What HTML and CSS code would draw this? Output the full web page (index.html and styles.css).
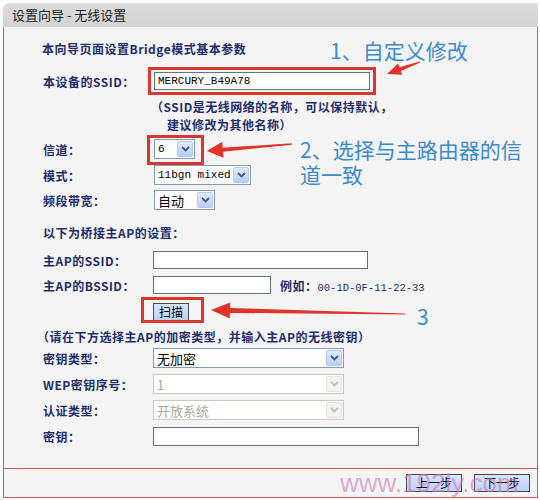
FILE: index.html
```html
<!DOCTYPE html>
<html lang="zh-CN">
<head>
<meta charset="UTF-8">
<meta name="viewport" content="width=device-width, initial-scale=1.0">
<title>设置向导 - 无线设置</title>
<link rel="stylesheet" href="styles.css">
</head>
<body>
<div class="wizard">
    <div class="wtitle">设置向导 - 无线设置</div>

    <div class="wbody">
        <div class="intro">本向导页面设置Bridge模式基本参数</div>

        <div class="row row-ssid">
            <span class="lbl">本设备的SSID：</span>
            <input type="text" class="field f-ssid" value="MERCURY_B49A78">
        </div>
        <div class="note">（SSID是无线网络的名称，可以保持默认，</div>
        <div class="note note-cont">建议修改为其他名称）</div>

        <div class="row row-chan first">
            <span class="lbl">信道：</span>
            <div class="sel s-chan">
                <span class="opt mono">6</span>
                <span class="drop"><svg width="9" height="6" viewBox="0 0 9 6"><path d="M1 1 L4.5 4.5 L8 1" fill="none" stroke="#3f5586" stroke-width="1.8"/></svg></span>
            </div>
        </div>
        <div class="row row-chan">
            <span class="lbl">模式：</span>
            <div class="sel s-mode">
                <span class="opt mono">11bgn mixed</span>
                <span class="drop"><svg width="9" height="6" viewBox="0 0 9 6"><path d="M1 1 L4.5 4.5 L8 1" fill="none" stroke="#3f5586" stroke-width="1.8"/></svg></span>
            </div>
        </div>
        <div class="row row-band">
            <span class="lbl">频段带宽：</span>
            <div class="sel s-band">
                <span class="opt">自动</span>
                <span class="drop"><svg width="9" height="6" viewBox="0 0 9 6"><path d="M1 1 L4.5 4.5 L8 1" fill="none" stroke="#3f5586" stroke-width="1.8"/></svg></span>
            </div>
        </div>

        <div class="section">以下为桥接主AP的设置：</div>
        <div class="row row-ap">
            <span class="lbl">主AP的SSID：</span>
            <input type="text" class="field f-apssid" value="">
        </div>
        <div class="row row-bssid">
            <span class="lbl">主AP的BSSID：</span>
            <input type="text" class="field f-bssid" value="">
            <span class="hint">例如：<span class="mono">00-1D-0F-11-22-33</span></span>
        </div>
        <div class="row row-scan">
            <span class="lbl"></span>
            <button class="btn btn-scan">扫描</button>
        </div>

        <div class="section note-enc">（请在下方选择主AP的加密类型，并输入主AP的无线密钥）</div>
        <div class="row row-sec first">
            <span class="lbl">密钥类型：</span>
            <div class="sel s-wide">
                <span class="opt">无加密</span>
                <span class="drop"><svg width="9" height="6" viewBox="0 0 9 6"><path d="M1 1 L4.5 4.5 L8 1" fill="none" stroke="#3f5586" stroke-width="1.8"/></svg></span>
            </div>
        </div>
        <div class="row row-sec">
            <span class="lbl">WEP密钥序号：</span>
            <div class="sel s-wide off">
                <span class="opt">1</span>
                <span class="drop"><svg width="9" height="6" viewBox="0 0 9 6"><path d="M1 1 L4.5 4.5 L8 1" fill="none" stroke="#c4c2b6" stroke-width="1.8"/></svg></span>
            </div>
        </div>
        <div class="row row-sec">
            <span class="lbl">认证类型：</span>
            <div class="sel s-wide off">
                <span class="opt">开放系统</span>
                <span class="drop"><svg width="9" height="6" viewBox="0 0 9 6"><path d="M1 1 L4.5 4.5 L8 1" fill="none" stroke="#c4c2b6" stroke-width="1.8"/></svg></span>
            </div>
        </div>
        <div class="row row-sec">
            <span class="lbl">密钥：</span>
            <input type="text" class="field f-key" value="">
        </div>
    </div>

    <div class="wfoot">
        <button class="btn">上一步</button>
        <button class="btn">下一步</button>
    </div>
</div>

<!-- annotations drawn over the screenshot -->
<svg class="marks" width="540" height="500" viewBox="0 0 540 500">
    <rect x="149.5" y="68.5" width="225" height="25" fill="none" stroke="#d8372f" stroke-width="3"/>
    <rect x="148.5" y="136.5" width="54" height="27" fill="none" stroke="#d8372f" stroke-width="3"/>
    <rect x="142.5" y="298.5" width="60" height="23" fill="none" stroke="#d8372f" stroke-width="3"/>
    <polygon fill="#e2332b" points="387,74 398.1,63.6 399.5,67.3 419.8,61.5 420.2,62.5 400.9,71.1 402.2,74.8"/>
    <polygon fill="#e2332b" points="207,151 222.2,141.7 222.7,147.7 291.9,143.3 292.1,144.7 223.1,151.7 223.6,157.7"/>
    <polygon fill="#e2332b" points="211,310 230.2,302.4 230.1,307.9 405,313.5 405,314.5 229.9,312.9 229.8,318.4"/>
</svg>
<div class="tip tip1">1、自定义修改</div>
<div class="tip tip2">2、选择与主路由器的信<br>道一致</div>
<div class="tip tip3">3</div>
<div class="wmark">www.192ly.com</div>
</body>
</html>
```

FILE: styles.css
```css
body{
    margin: 0;
    background-color: #fff;
    font-family: "Noto Sans CJK SC", sans-serif;
}
.wizard{
    width: 535px;
    margin: 3px 0 0 3px;
}
.wtitle{
    height: 24px;
    line-height: 24px;
    padding-left: 9px;
    font-size: 13px;
    color: #222;
    background: linear-gradient(#dddddd, #d3d3d3);
    border-radius: 6px 0 0 0;
}
.wbody{
    height: 441px;
    box-sizing: border-box;
    padding: 11px 0 0 39px;
    background-color: #f4f4f4;
    border-left: 1px solid #cf5b5b;
    border-right: 1px solid #cf5b5b;
}
.intro, .lbl, .note, .section, .hint{
    font-size: 12px;
    font-weight: 700;
    letter-spacing: 0.5px;
    color: #1f2d6b;
}
.intro{
    height: 22px;
    line-height: 22px;
    margin-left: -1px;
}
.row{
    display: flex;
    align-items: center;
    height: 22px;
}
.lbl{
    width: 110px;
    flex-shrink: 0;
}
.mono{
    font-family: "Liberation Mono", monospace;
    font-size: 11px;
    letter-spacing: 0;
    font-weight: 400;
}
.row-ssid{ margin-top: 10px; }
.note{
    height: 18px;
    line-height: 18px;
    margin-top: 6px;
    margin-left: 108px;
}
.note-cont{
    margin-top: 0;
    margin-left: 124px;
}
.row-chan{ height: 26px; }
.row-chan.first{ margin-top: 2px; }
.row-band{ height: 24px; }
.section{
    height: 22px;
    line-height: 22px;
    margin-top: 10px;
}
.row-ap{ height: 24px; margin-top: 4px; }
.row-bssid{ height: 24px; margin-top: 1px; }
.row-scan{ height: 24px; margin-top: 3px; }
.note-enc{
    height: 20px;
    line-height: 20px;
    margin-top: 3px;
    margin-left: -6px;
}
.row-sec{ margin-top: 4px; }
.row-sec.first{ margin-top: 0; }

/* text boxes */
.field{
    box-sizing: border-box;
    height: 18px;
    margin: 0;
    padding: 0 3px;
    border: 1px solid #5d7676;
    background: #fff;
    font-family: "Liberation Mono", monospace;
    font-size: 11px;
    color: #000;
}
.f-ssid{ width: 216px; margin-left: 1px; }
.f-apssid{ width: 215px; }
.f-bssid{ width: 118px; }
.f-key{ width: 266px; height: 19px; }
.hint{
    margin-left: 9px;
    font-weight: 700;
}
.hint .mono{
    font-size: 10.5px;
    color: #1f2d6b;
}

/* drop-down boxes */
.sel{
    box-sizing: border-box;
    display: flex;
    align-items: center;
    height: 20px;
    border: 1px solid #7f9db9;
    background: #fff;
    color: #000;
}
.sel .opt{
    flex: 1;
    padding-left: 3px;
    font-size: 13px;
    white-space: nowrap;
}
.sel .opt.mono{ font-size: 11px; }
.drop{
    box-sizing: border-box;
    display: flex;
    align-items: center;
    justify-content: center;
    width: 16px;
    height: 16px;
    margin-right: 1px;
    border: 1px solid #b4c8f0;
    border-radius: 2px;
    background: linear-gradient(#e1eafe, #b9cdf7);
}
.s-chan{ width: 41px; margin-left: 1px; }
.s-mode{ width: 97px; margin-left: 1px; }
.s-band{ width: 61px; margin-left: 1px; }
.s-wide{ width: 191px; }
.sel.off{
    border-color: #cdcabd;
    color: #aca899;
}
.sel.off .drop{
    border-color: #e3e1d8;
    background: #f3f2ed;
}

/* buttons */
.btn{
    box-sizing: border-box;
    height: 18px;
    padding: 0;
    border: 1px solid #4a4a4a;
    background: linear-gradient(#d6e6fb, #bcd2f3);
    font-family: "Noto Sans CJK SC", sans-serif;
    font-size: 12px;
    line-height: 16px;
    color: #000;
}
.btn-scan{ width: 36px; }
.wfoot{
    display: flex;
    align-items: center;
    justify-content: flex-end;
    gap: 12px;
    height: 28px;
    padding-right: 7px;
    background-color: #f4f4f4;
    border: 1px solid #cf5b5b;
}
.wfoot .btn{ width: 56px; }

/* annotation layer */
.marks{
    position: absolute;
    left: 0;
    top: 0;
    pointer-events: none;
}
.tip{
    position: absolute;
    font-family: "Noto Sans CJK SC", sans-serif;
    font-size: 21px;
    line-height: 25px;
    color: #3a8ad0;
    white-space: nowrap;
}
.tip1{ left: 330px; top: 38px; }
.tip2{ left: 300px; top: 137px; }
.tip3{ left: 417px; top: 304px; }
.wmark{
    position: absolute;
    left: 340px;
    top: 468px;
    font-family: "Liberation Sans", sans-serif;
    font-size: 26px;
    color: rgba(200, 120, 190, 0.6);
    pointer-events: none;
}
```
